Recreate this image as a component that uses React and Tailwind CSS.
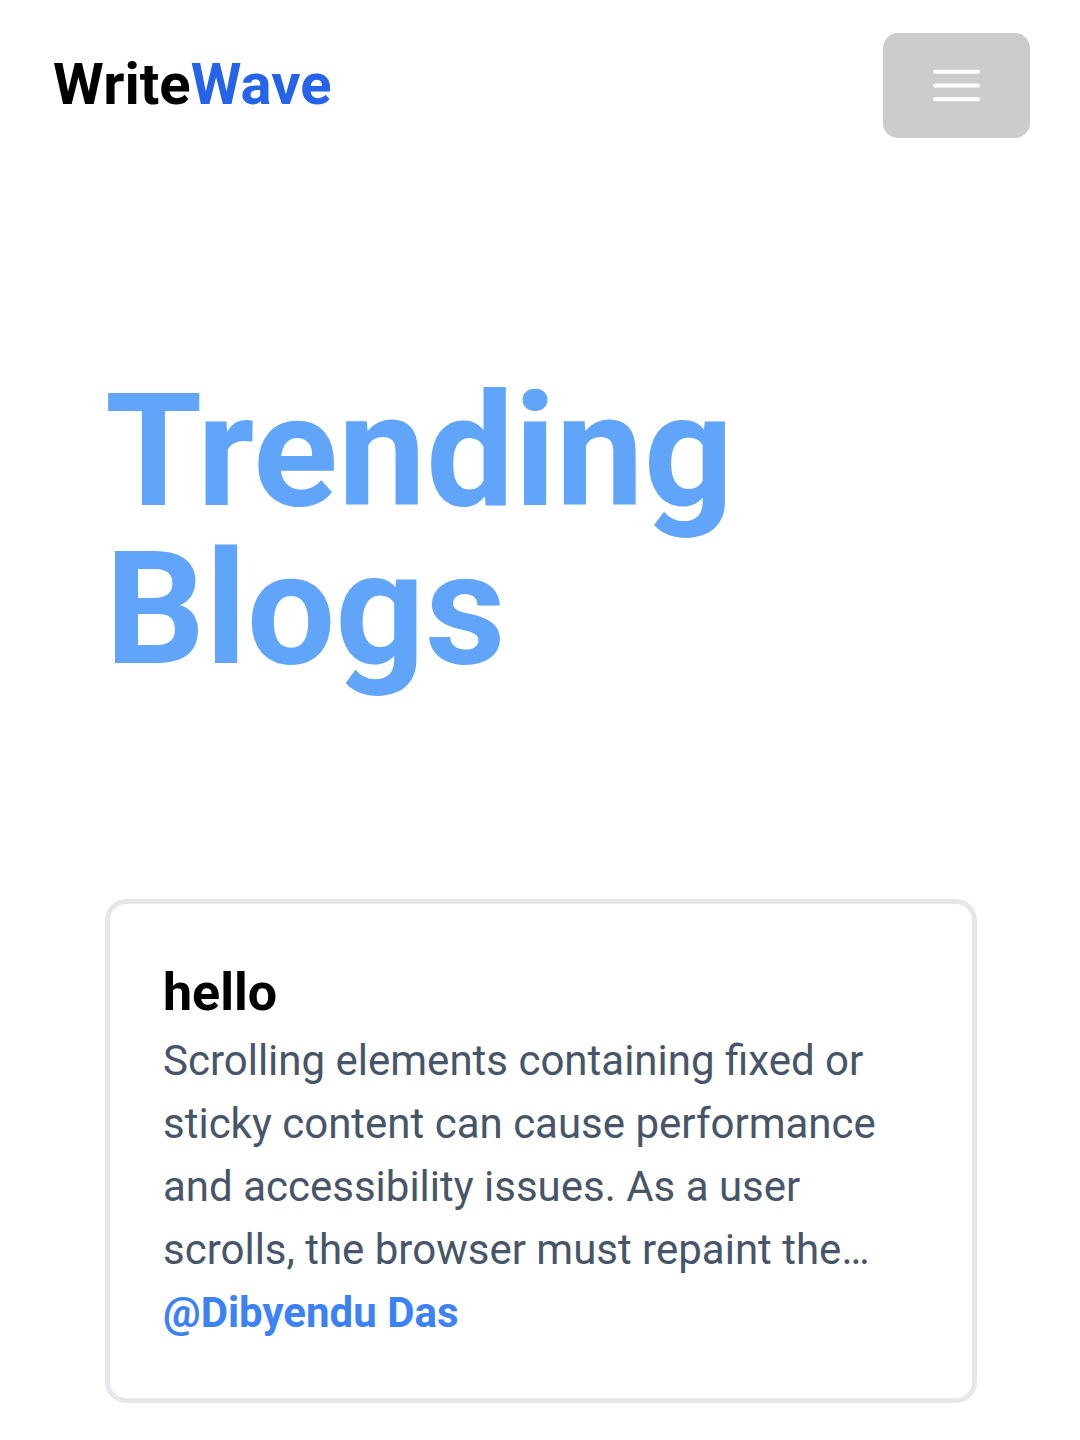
const posts = [
  {
    title: "hello",
    body: "Scrolling elements containing fixed or sticky content can cause performance and accessibility issues. As a user scrolls, the browser must repaint the…",
    author: "@Dibyendu Das",
  },
];

function Header() {
  return (
    <header className="flex items-start justify-between pt-[33px] pr-[50px] pl-[53px]">
      <a href="#" className="mt-3 text-[58px] leading-[78px] font-bold text-black">
        Write<span className="text-[#2563eb]">Wave</span>
      </a>
      <button
        type="button"
        aria-label="Open menu"
        className="flex h-[105px] w-[147px] items-center justify-center rounded-[15px] bg-[#cccccc] text-white"
      >
        <svg width="47" height="33" viewBox="0 0 47 33" fill="none" stroke="currentColor" strokeWidth="4" strokeLinecap="round" aria-hidden="true">
          <path d="M2 2.7h43M2 16.5h43M2 30.2h43" />
        </svg>
      </button>
    </header>
  );
}

function PostCard({ post }) {
  return (
    <article className="rounded-[21px] border-[5px] border-[#e5e7eb] px-[53px] pt-[53px] pb-[54px] text-[42px] leading-[63px]">
      <h2 className="text-[52px] leading-[72px] font-bold text-black">{post.title}</h2>
      <p className="text-[#475569]">{post.body}</p>
      <a href="#" className="block font-bold text-[#3b82f6]">{post.author}</a>
    </article>
  );
}

export default function App() {
  return (
    <div className="min-h-screen bg-white font-['Roboto',sans-serif]">
      <Header />
      <main className="pt-[234px] pr-[103px] pb-[37px] pl-[105px]">
        <h1 className="max-w-[700px] text-[157px] leading-[158px] font-bold text-[#60a5fa]">
          Trending Blogs
        </h1>
        <section className="mt-[211px]">
          {posts.map((post) => (
            <PostCard key={post.title} post={post} />
          ))}
        </section>
      </main>
    </div>
  );
}
